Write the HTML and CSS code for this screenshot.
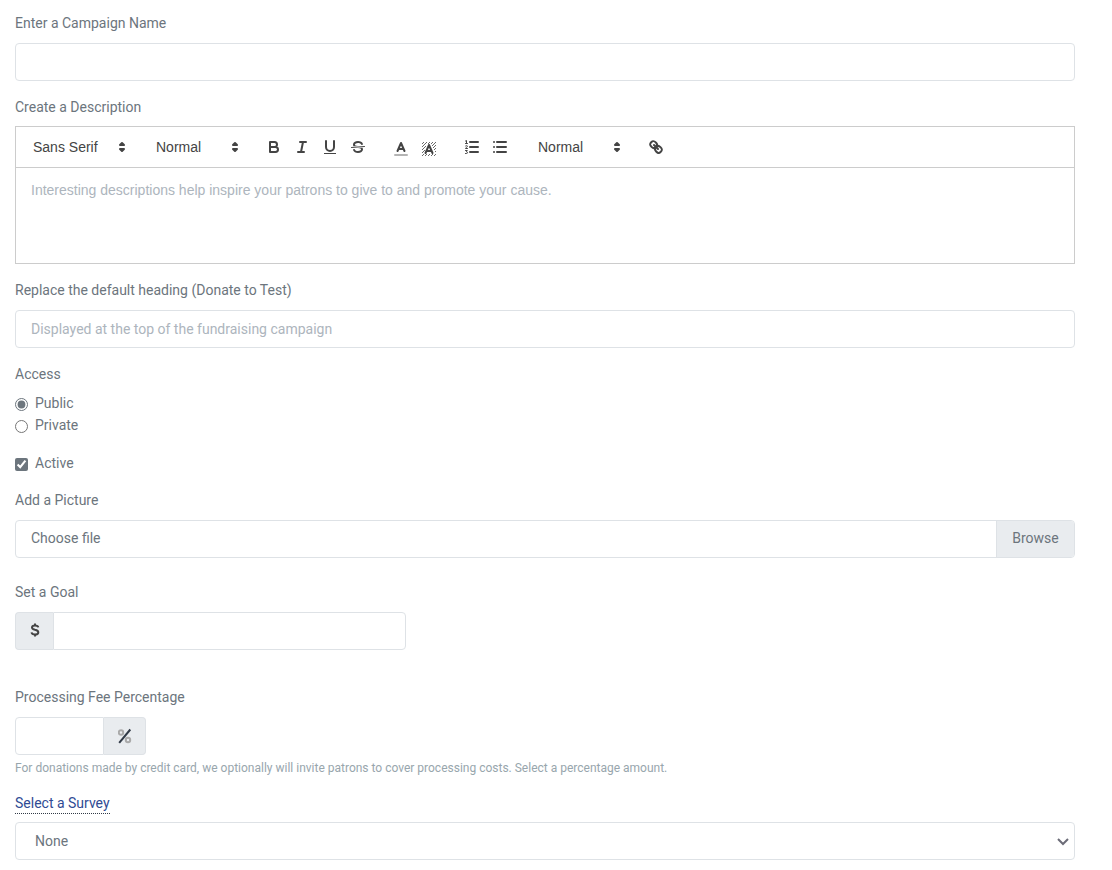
FILE: index.html
```html
<!DOCTYPE html>
<html lang="en">
<head>
<meta charset="utf-8">
<title>Campaign</title>
<link rel="stylesheet" href="styles.css">
</head>
<body>
<form class="form">
  <div class="group">
    <label class="label" for="name">Enter a Campaign Name</label>
    <input class="control" id="name" type="text">
  </div>

  <div class="group group-editor">
    <label class="label" for="description">Create a Description</label>
    <div class="editor">
      <div class="toolbar">
        <div class="picker picker-font">
          <select aria-label="Font"><option>Sans Serif</option></select>
          <svg class="icon" viewBox="0 0 18 18"><path class="solid" d="M7 11L9 13L11 11ZM7 7L9 5L11 7Z"/></svg>
        </div>
        <div class="picker">
          <select aria-label="Size"><option>Normal</option></select>
          <svg class="icon" viewBox="0 0 18 18"><path class="solid" d="M7 11L9 13L11 11ZM7 7L9 5L11 7Z"/></svg>
        </div>
        <div class="tools">
          <button type="button" class="tool" aria-label="Bold"><svg class="icon" viewBox="0 0 18 18"><path d="M5 4H9.5A2.5 2.5 0 0 1 9.5 9H5ZM5 9H10.5A2.5 2.5 0 0 1 10.5 14H5Z"/></svg></button>
          <button type="button" class="tool" aria-label="Italic"><svg class="icon" viewBox="0 0 18 18"><path d="M7 4H13M5 14H11M8 14L10 4"/></svg></button>
          <button type="button" class="tool" aria-label="Underline"><svg class="icon" viewBox="0 0 18 18"><path d="M5 3V9A4 4 0 0 0 13 9V3"/><rect class="fill" x="3" y="15" width="12" height="1"/></svg></button>
          <button type="button" class="tool" aria-label="Strike"><svg class="icon" viewBox="0 0 18 18"><path class="thin" d="M15.5 8.5L2.5 9.5"/><path class="fill" d="M9.007,8C6.542,7.791,6,7.519,6,6.5,6,5.792,7.283,5,9,5c1.571,0,2.765.679,2.969,1.309a1,1,0,0,0,1.9-.617C13.356,4.106,11.354,3,9,3,6.2,3,4,4.538,4,6.5a3.2,3.2,0,0,0,.5,1.843Z"/><path class="fill" d="M8.984,10C11.457,10.208,12,10.479,12,11.5c0,0.708-1.283,1.5-3,1.5-1.571,0-2.765-.679-2.969-1.309a1,1,0,1,0-1.9.617C4.644,13.894,6.646,15,9,15c2.8,0,5-1.538,5-3.5a3.2,3.2,0,0,0-.5-1.843Z"/></svg></button>
        </div>
        <div class="tools tools-color">
          <button type="button" class="tool" aria-label="Text color"><svg class="icon" viewBox="0 0 18 18"><path class="faint" d="M3 15H15"/><path d="M5.5 11L9 3L12.5 11M11.63 9H6.38"/></svg></button>
          <button type="button" class="tool" aria-label="Background color"><svg class="icon" viewBox="0 0 18 18"><path class="hatch" d="M2 4L4 2M2 7L7 2M2 10L6 6M2 13L5 10M2 16L4 14M5 16L7 14M8 16L10 14M11 16L13 14M14 16L16 14M10 2L8 4M13 2L11 4M16 2L12 6M16 5L13 8M16 8L14 10M16 11L15 12"/><path d="M5.500 13L9 5L12.500 13M11.630 11H6.380"/></svg></button>
        </div>
        <div class="tools">
          <button type="button" class="tool" aria-label="Ordered list"><svg class="icon" viewBox="0 0 18 18"><path d="M7 4H15M7 9H15M7 14H15"/><path class="thin" d="M2.500 5.500H4.500M3.500 5.500V2.500L2.500 3M4.500 10.500H2.500C2.500 9.500 4.400 9.300 4.400 8.300C4.400 7.400 3 7.300 2.500 8M2.500 12.500H4.300L3.300 13.700C4.900 13.600 4.900 15.500 3.500 15.500H2.500"/></svg></button>
          <button type="button" class="tool" aria-label="Bullet list"><svg class="icon" viewBox="0 0 18 18"><path d="M6 4H15M6 9H15M6 14H15M3 4H3.010M3 9H3.010M3 14H3.010"/></svg></button>
        </div>
        <div class="picker">
          <select aria-label="Heading"><option>Normal</option></select>
          <svg class="icon" viewBox="0 0 18 18"><path class="solid" d="M7 11L9 13L11 11ZM7 7L9 5L11 7Z"/></svg>
        </div>
        <div class="tools">
          <button type="button" class="tool" aria-label="Link"><svg class="icon" viewBox="0 0 18 18"><path d="M7 7L11 11"/><path d="M8.9,4.577a3.476,3.476,0,0,1,.36,4.679A3.476,3.476,0,0,1,4.577,8.9C3.185,7.5,2.035,6.4,4.217,4.217S7.5,3.185,8.9,4.577Z"/><path d="M13.423,9.1a3.476,3.476,0,0,0-4.679-.36,3.476,3.476,0,0,0,.36,4.679c1.392,1.392,2.5,2.542,4.679.36S14.815,10.5,13.423,9.1Z"/></svg></button>
        </div>
      </div>
      <textarea class="editor-area" id="description" placeholder="Interesting descriptions help inspire your patrons to give to and promote your cause."></textarea>
    </div>
  </div>

  <div class="group">
    <label class="label" for="heading">Replace the default heading (Donate to Test)</label>
    <input class="control" id="heading" type="text" placeholder="Displayed at the top of the fundraising campaign">
  </div>

  <fieldset class="group access">
    <legend class="label">Access</legend>
    <div class="check"><input type="radio" name="access" id="public" checked><label for="public">Public</label></div>
    <div class="check"><input type="radio" name="access" id="private"><label for="private">Private</label></div>
  </fieldset>

  <div class="group check"><input type="checkbox" id="active" checked><label for="active">Active</label></div>

  <div class="group group-file">
    <label class="label" for="picture">Add a Picture</label>
    <div class="joined file">
      <span class="file-name">Choose file</span>
      <span class="addon addon-text">Browse</span>
      <input class="file-input" type="file" id="picture">
    </div>
  </div>

  <div class="group group-goal">
    <label class="label" for="goal">Set a Goal</label>
    <div class="joined goal">
      <span class="addon"><svg class="dollar" viewBox="0 0 10 14"><path d="M8.300 4.400C8 2.900 6.800 2.600 5 2.600C3 2.600 2 3.300 2 4.600C2 6 3.300 6.400 5 6.800C7 7.200 8.300 7.800 8.300 9.400C8.300 10.800 7 11.500 5 11.500C3 11.500 1.800 10.900 1.500 9.400M5 .5V2.600M5 11.500V13.500"/></svg></span>
      <input class="control" id="goal" type="text">
    </div>
  </div>

  <div class="group group-fee">
    <label class="label" for="fee">Processing Fee Percentage</label>
    <div class="joined fee">
      <input class="control" id="fee" type="text">
      <span class="addon"><svg class="percent" viewBox="0 0 14 16"><circle cx="3" cy="4.500" r="2.200"/><circle cx="10" cy="12" r="2.200"/><path d="M12.300 1.500L1.200 14.800"/></svg></span>
    </div>
    <small class="help">For donations made by credit card, we optionally will invite patrons to cover processing costs. Select a percentage amount.</small>
  </div>

  <div class="group group-survey">
    <label class="label" for="survey"><a class="link" href="#survey">Select a Survey</a></label>
    <div class="select">
      <select class="control" id="survey"><option>None</option></select>
      <svg class="chevron" viewBox="0 0 14 10"><path d="M2 2L7 7L12 2"/></svg>
    </div>
  </div>
</form>
</body>
</html>
```
FILE: styles.css
```css
* {
  box-sizing: border-box;
}

body {
  margin: 0;
  background: #fff;
  color: #6c757d;
  font: 14px/22px Roboto, sans-serif;
}

.form {
  padding: 12px 37px 0 15px;
}

.group {
  margin: 0 0 15px;
}

.label {
  display: block;
  margin-bottom: 9px;
  padding: 0;
}

.group-editor .label,
.group-survey .label {
  margin-bottom: 8px;
}

.control {
  display: block;
  width: 100%;
  height: 38px;
  padding: 0 15px;
  border: 1px solid #dee2e6;
  border-radius: 4px;
  background: #fff;
  color: #6c757d;
  font: inherit;
}

.control::placeholder,
.editor-area::placeholder {
  color: #adb5bd;
  opacity: 1;
}

.editor {
  border: 1px solid #ccc;
  font-family: "Liberation Sans", Arial, sans-serif;
}

.toolbar {
  display: flex;
  flex-wrap: wrap;
  gap: 0 15px;
  padding: 8px;
  border-bottom: 1px solid #ccc;
}

.tools {
  display: flex;
}

.tools-color {
  padding-top: 2px;
  margin-bottom: -2px;
}

.tool {
  width: 28px;
  height: 24px;
  padding: 3px 5px;
  border: 0;
  background: none;
}

.icon {
  display: block;
  width: 18px;
  height: 18px;
  fill: none;
  stroke: #444;
  stroke-width: 2;
  stroke-linecap: round;
  stroke-linejoin: round;
}

.icon .thin {
  stroke-width: 1;
}

.icon .hatch {
  stroke-width: 0.8;
  stroke-linecap: butt;
}

.icon .faint {
  opacity: 0.4;
}

.icon .fill {
  fill: #444;
  stroke: none;
}

.icon .solid {
  fill: #444;
}

.picker {
  position: relative;
  width: 98px;
}

.picker-font {
  width: 108px;
}

.picker select {
  display: block;
  appearance: none;
  width: 100%;
  height: 24px;
  padding: 0 9px;
  border: 0;
  background: none;
  color: #444;
  font: 500 14px/24px "Liberation Sans", Arial, sans-serif;
}

.picker .icon {
  position: absolute;
  top: 3px;
  right: 1px;
  pointer-events: none;
}

.editor-area {
  display: block;
  width: 100%;
  height: 95px;
  padding: 12px 15px;
  border: 0;
  background: none;
  color: #6c757d;
  font: 14px/20px "Liberation Sans", Arial, sans-serif;
  resize: none;
}

.access {
  margin-bottom: 16px;
  padding: 0;
  border: 0;
}

.access .label {
  margin-bottom: 7px;
}

.check {
  display: flex;
  align-items: center;
  gap: 7px;
}

.check input {
  width: 13px;
  height: 13px;
  margin: 3px 0 0;
  accent-color: #6c757d;
}

.joined {
  display: flex;
}

.addon {
  display: flex;
  align-items: center;
  justify-content: center;
  flex: none;
  height: 38px;
  border: 1px solid #dee2e6;
  background: #e9ecef;
}

.addon:first-child {
  border-right: 0;
  border-radius: 4px 0 0 4px;
}

.addon + .control {
  border-radius: 0 4px 4px 0;
}

.control + .addon {
  border-left: 0;
  border-radius: 0 4px 4px 0;
}

.control:has(+ .addon) {
  border-radius: 4px 0 0 4px;
}

.file {
  position: relative;
  border: 1px solid #dee2e6;
  border-radius: 4px;
  overflow: hidden;
}

.file-name {
  flex: 1;
  padding: 6px 15px 8px;
}

.addon-text {
  width: 78px;
  height: 36px;
  padding-bottom: 2px;
  border-width: 0 0 0 1px;
}

.file-input {
  position: absolute;
  inset: 0;
  width: 100%;
  opacity: 0;
}

.group-file {
  margin-bottom: 23px;
}

.group-goal {
  margin-bottom: 36px;
}

.goal {
  max-width: 391px;
}

.goal .addon {
  width: 38px;
  padding-bottom: 2px;
}

.fee {
  width: 131px;
}

.fee .addon {
  width: 42px;
}

.dollar {
  width: 10px;
  height: 14px;
  fill: none;
  stroke: #444;
  stroke-width: 2;
}

.percent {
  width: 14px;
  height: 16px;
  fill: none;
  stroke: #aaa;
  stroke-width: 2;
}

.percent path {
  stroke: #313a46;
}

.help {
  display: block;
  margin-top: 4px;
  color: #98a6ad;
  font-size: 12px;
  line-height: 18px;
}

.link {
  display: inline-block;
  border-bottom: 1px dotted #313a46;
  color: #2f4b94;
  line-height: 20px;
  text-decoration: none;
}

.select {
  position: relative;
}

.select .control {
  appearance: none;
  padding: 0 19px;
}

.chevron {
  position: absolute;
  top: 15px;
  right: 5px;
  width: 14px;
  height: 10px;
  fill: none;
  stroke: #6c6c78;
  stroke-width: 2;
  pointer-events: none;
}
```
